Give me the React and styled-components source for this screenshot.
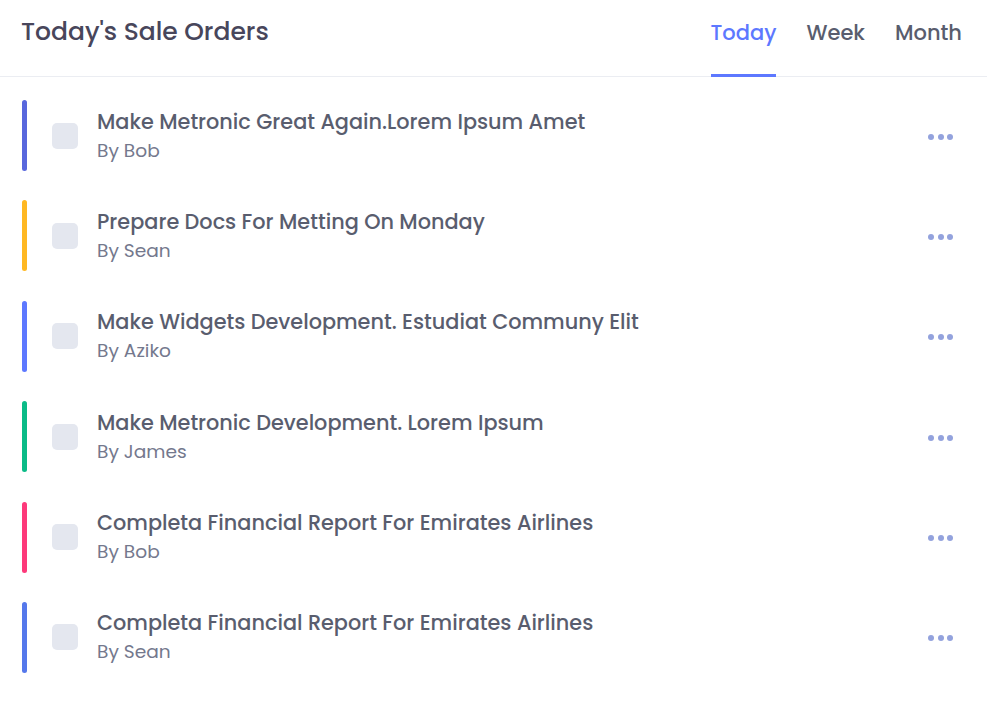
import React, { useState } from "react";
import styled, { createGlobalStyle } from "styled-components";

const GlobalStyle = createGlobalStyle`
  body {
    margin: 0;
    background: #ffffff;
    font-family: Poppins, "Open Sans", sans-serif;
  }
`;

// Карточка целиком
const Portlet = styled.div`
  width: 987px;
  background: #ffffff;
`;

const Head = styled.div`
  display: flex;
  justify-content: space-between;
  align-items: stretch;
  height: 76px;
  padding: 0 25px 0 21px;
  border-bottom: 1px solid #ebedf2;
`;

const Title = styled.h3`
  margin: 0;
  align-self: center;
  padding-bottom: 12px;
  font-size: 25px;
  font-weight: 500;
  color: #48465b;
`;

const Tabs = styled.div`
  display: flex;
  gap: 30px;
`;

const Tab = styled.button`
  display: flex;
  align-items: center;
  padding: 0 0 10px;
  margin-bottom: -1px;
  background: none;
  border: none;
  border-bottom: 3px solid ${(p) => (p.$active ? "#5d78ff" : "transparent")};
  font-family: inherit;
  font-size: 21px;
  font-weight: 500;
  color: ${(p) => (p.$active ? "#5d78ff" : "#595d6e")};
  cursor: pointer;
`;

const List = styled.div`
  display: flex;
  flex-direction: column;
  gap: 29.4px;
  padding: 23px 34px 0 22px;
`;

const Item = styled.div`
  display: flex;
  align-items: center;
  height: 71px;
`;

const Bar = styled.span`
  width: 5px;
  height: 100%;
  border-radius: 3px;
  background: ${(p) => p.$color};
  flex-shrink: 0;
`;

const Check = styled.span`
  width: 26px;
  height: 26px;
  margin: 0 19px 0 25px;
  border-radius: 5px;
  background: #e4e7ef;
  flex-shrink: 0;
`;

const Info = styled.div`
  flex: 1;
  display: flex;
  flex-direction: column;
  gap: 2px;
`;

const ItemTitle = styled.div`
  font-size: 20.8px;
  font-weight: 500;
  color: #595d6e;
  line-height: 28px;
`;

const ItemBy = styled.div`
  font-size: 18.6px;
  color: #74788d;
  line-height: 26px;
`;

const Dots = styled.button`
  display: flex;
  gap: 3.5px;
  padding: 0;
  margin-top: 2px;
  background: none;
  border: none;
  cursor: pointer;

  span {
    width: 6px;
    height: 6px;
    border-radius: 50%;
    background: #93a2dd;
  }
`;

const items = [
  { title: "Make Metronic Great Again.Lorem Ipsum Amet", by: "Bob", color: "#5867dd" },
  { title: "Prepare Docs For Metting On Monday", by: "Sean", color: "#ffb822" },
  { title: "Make Widgets Development. Estudiat Communy Elit", by: "Aziko", color: "#5d78ff" },
  { title: "Make Metronic Development. Lorem Ipsum", by: "James", color: "#0abb87" },
  { title: "Completa Financial Report For Emirates Airlines", by: "Bob", color: "#fd397a" },
  { title: "Completa Financial Report For Emirates Airlines", by: "Sean", color: "#5578eb" },
];

export default function App() {
  const [tab, setTab] = useState("Today");

  return (
    <Portlet>
      <GlobalStyle />
      <Head>
        <Title>Today's Sale Orders</Title>
        <Tabs>
          {["Today", "Week", "Month"].map((t) => (
            <Tab key={t} $active={tab === t} onClick={() => setTab(t)}>
              {t}
            </Tab>
          ))}
        </Tabs>
      </Head>

      <List>
        {items.map((it, i) => (
          <Item key={i}>
            <Bar $color={it.color} />
            <Check />
            <Info>
              <ItemTitle>{it.title}</ItemTitle>
              <ItemBy>By {it.by}</ItemBy>
            </Info>
            <Dots>
              <span />
              <span />
              <span />
            </Dots>
          </Item>
        ))}
      </List>
    </Portlet>
  );
}
